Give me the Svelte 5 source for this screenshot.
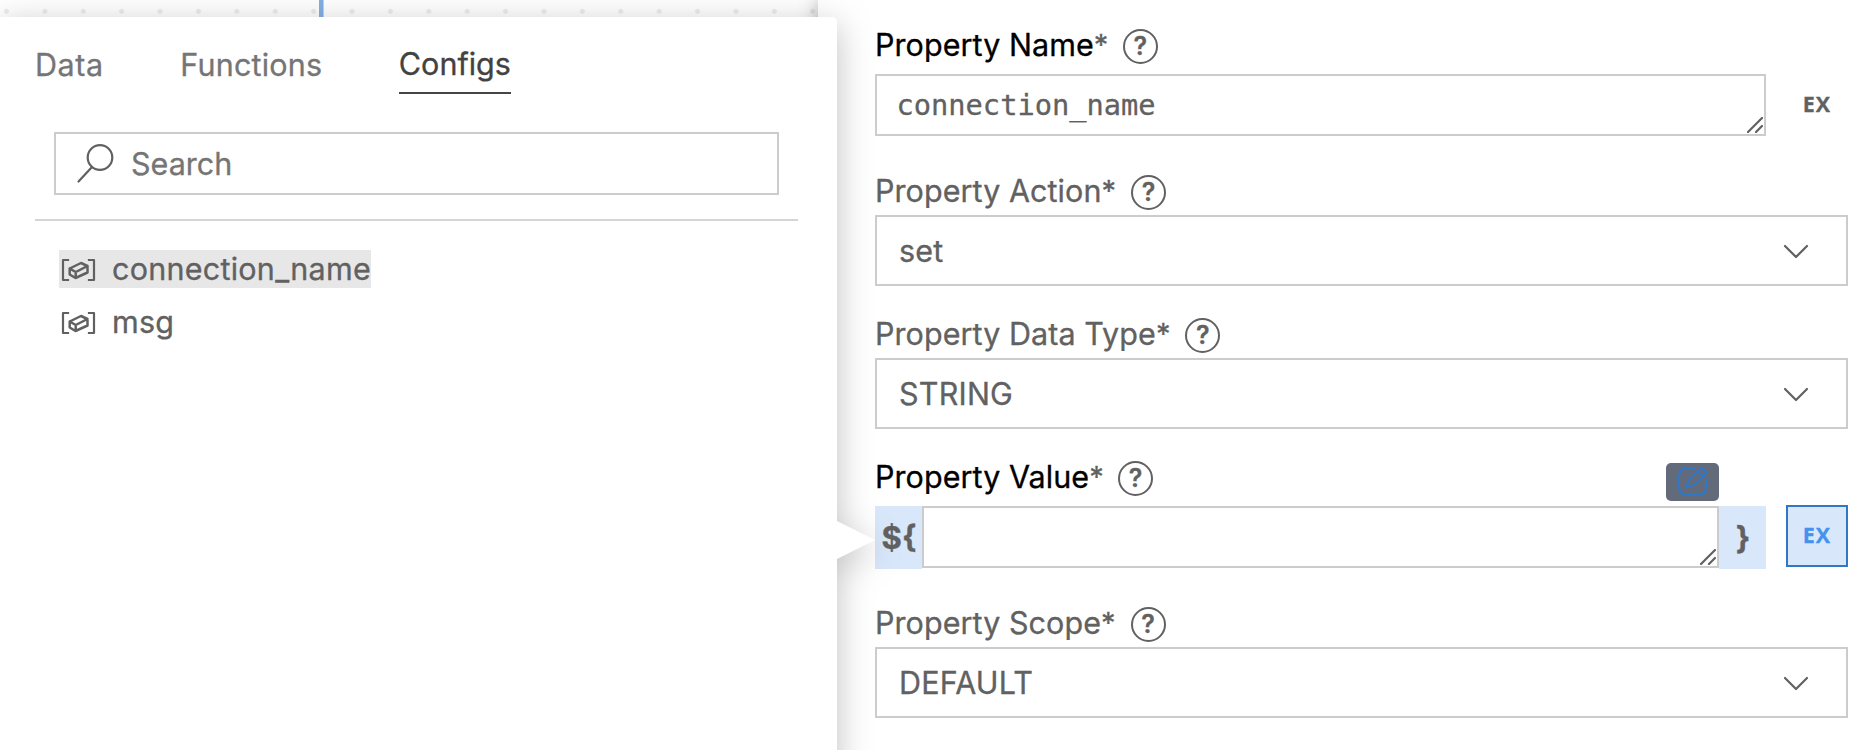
<script>
  const tabs = [
    { name: 'Data', spacing: 0.6 },
    { name: 'Functions', spacing: 0.2 },
    { name: 'Configs', spacing: 0, active: true }
  ];
  const configs = [
    { name: 'connection_name', selected: true },
    { name: 'msg', selected: false }
  ];
  const fields = [
    { label: 'Property Name', kind: 'text', value: 'connection_name', dark: true },
    { label: 'Property Action', kind: 'select', value: 'set' },
    { label: 'Property Data Type', kind: 'select', value: 'STRING' },
    { label: 'Property Value', kind: 'expression', value: '', dark: true },
    { label: 'Property Scope', kind: 'select', value: 'DEFAULT' }
  ];
</script>

{#snippet grip()}
  <svg class="grip" width="16" height="16" viewBox="0 0 16 16"><path d="M1 15 15 1M9 15l6-6" /></svg>
{/snippet}

<div class="page">
  <div class="canvas"><div class="edge"></div></div>

  <main class="properties">
    {#each fields as f}
      <section class="field {f.kind}">
        <div class="label" class:dark={f.dark}>
          <span>{f.label}</span><span class="star">*</span><span class="help">?</span>
        </div>
        {#if f.kind === 'select'}
          <div class="dropdown">
            <span>{f.value}</span>
            <svg width="26" height="16" viewBox="0 0 26 16"><path d="M2 3 13 14 24 3" /></svg>
          </div>
        {:else if f.kind === 'text'}
          <div class="row">
            <div class="area">{f.value}{@render grip()}</div>
            <button class="ex">EX</button>
          </div>
        {:else}
          <div class="row">
            <div class="brace">$&#123;</div>
            <div class="area">{f.value}{@render grip()}
              <div class="edit">
                <svg width="31" height="31" viewBox="0 0 31 31">
                  <path d="M17 2.200H10.500Q2 2.200 2 10.500v10.500Q2 29 10.500 29h10Q29 29 29 21V13.500" />
                  <path d="M9.500 21.200 11.700 14 22 3.700a3.900 3.900 0 0 1 5.600 5.600L17 19ZM20.500 5.300l5.500 5.500" />
                </svg>
              </div>
            </div>
            <div class="brace">&#125;</div>
            <button class="ex on">EX</button>
          </div>
        {/if}
      </section>
    {/each}
  </main>

  <aside class="popover">
    <nav>
      {#each tabs as t}
        <span class="tab" class:active={t.active} style:letter-spacing="{t.spacing}px">{t.name}</span>
      {/each}
    </nav>
    <div class="search">
      <svg width="38" height="42" viewBox="0 0 38 42"><circle cx="24" cy="14.500" r="12.300" /><path d="M16 24 2.500 38.500" /></svg>
      <span>Search</span>
    </div>
    <hr />
    <ul>
      {#each configs as c}
        <li class:selected={c.selected}>
          <svg width="36" height="24" viewBox="0 0 36 24">
            <path class="bracket" d="M8 2H3v20h5M29 2h5v20h-5" />
            <path d="M9.700 10.500 21 5 27.500 8v6.500L15.500 20 9.700 16.500ZM9.700 10.500l6 3.500L27.500 8M15.700 14v6" />
          </svg>
          <span>{c.name}</span>
        </li>
      {/each}
    </ul>
    <svg class="pointer" width="38" height="38" viewBox="0 0 38 38"><path d="M0 0 38 19 0 38Z" /></svg>
  </aside>
</div>

<style>
  :global(body) { margin: 0; background: #fff; overflow: hidden; }
  .page {
    position: relative;
    display: grid;
    grid-template-columns: 818px 1fr;
    width: 1870px;
    height: 750px;
    overflow: hidden;
    font-family: Inter, "Liberation Sans", sans-serif;
    font-size: 30.5px;
    line-height: 38px;
    color: #616161;
    -webkit-text-stroke: 0.3px currentColor;
  }
  svg { display: block; flex: none; fill: none; stroke: #616161; stroke-width: 2.2; stroke-linecap: round; stroke-linejoin: round; }
  .canvas {
    background: #fff radial-gradient(circle, #e9edf0 2.1px, transparent 2.8px) -12.7px -7.9px / 38.4px 38.4px;
  }
  .edge { width: 4px; height: 100%; margin-left: 319px; background: #84afe3; border-right: 1px solid #bed3ee; }
  .properties {
    background: #fff;
    box-shadow: 0 0 18px rgba(0, 0, 0, 0.3);
    padding: 26px 22px 0 57px;
  }
  .field { margin-bottom: 29px; }
  .field.text { margin-bottom: 36px; }
  .field.expression { margin-bottom: 35px; }
  .label { display: flex; align-items: center; height: 38px; margin-bottom: 5px; letter-spacing: 0.06px; }
  .text .label, .expression .label { margin-bottom: 10px; }
  .label.dark { color: #000; }
  .star { color: #616161; font-size: 29px; width: 15px; }
  .help {
    box-sizing: border-box;
    width: 35px;
    height: 35px;
    margin: 2px 0 0 14px;
    border: 2.4px solid #616161;
    border-radius: 50%;
    color: #616161;
    font-size: 25px;
    font-weight: 600;
    line-height: 31px;
    text-align: center;
  }
  .select .help { margin-left: 14.500px; }
  .dropdown {
    box-sizing: border-box;
    display: flex;
    align-items: center;
    justify-content: space-between;
    height: 71px;
    padding: 0 37.500px 0 22px;
    border: 2px solid #ccc;
    letter-spacing: 0.2px;
  }
  .row { display: flex; }
  .area {
    position: relative;
    box-sizing: border-box;
    flex: 1;
    height: 62px;
    padding: 10px 19.5px;
    border: 2px solid #ccc;
    font-family: "DejaVu Sans Mono", monospace;
    font-size: 28.700px;
  }
  .grip { position: absolute; right: 1px; bottom: 1px; }
  .ex {
    box-sizing: border-box;
    width: 62px;
    height: 62px;
    margin-left: 20px;
    padding: 0 0 2px;
    border: 2px solid transparent;
    background: none;
    color: #616161;
    font: 700 21.5px/56px "Open Sans", sans-serif;
    letter-spacing: 1px;
    text-align: center;
  }
  .ex.on { margin-top: -1px; border-color: #3077c6; background: #d9e7fa; color: #4492ee; }
  .brace {
    box-sizing: border-box;
    width: 47px;
    height: 63px;
    padding-left: 1px;
    background: #d9e7fa;
    font-size: 31px;
    font-weight: 700;
    line-height: 64px;
    text-align: center;
  }
  .edit {
    position: absolute;
    right: -2px;
    top: -45px;
    width: 53px;
    height: 38px;
    border-radius: 5px;
    background: #636b7a;
  }
  .edit svg { margin: 3px 0 0 11px; stroke: #3077c6; }
  .popover {
    position: absolute;
    left: 0;
    top: 17px;
    box-sizing: border-box;
    width: 837px;
    height: 900px;
    padding: 28px 39px 0 35px;
    border-radius: 0 5px 0 0;
    background: #fff;
    filter: drop-shadow(0 8px 17px rgba(0, 0, 0, 0.25));
  }
  nav { display: flex; gap: 76.500px; height: 87px; color: #757575; }
  .tab { box-sizing: border-box; height: 49px; padding-top: 1px; }
  .tab.active { padding-top: 0; border-bottom: 2px solid #454545; color: #424242; }
  .search {
    box-sizing: border-box;
    display: flex;
    align-items: center;
    height: 63px;
    margin: 0 19px 24px;
    padding-left: 20px;
    border: 2px solid #ccc;
    color: #757575;
  }
  .search span { margin-left: 17px; }
  hr { height: 2px; margin: 0; border: 0; background: #d5d5d5; }
  ul { display: flex; flex-direction: column; align-items: flex-start; gap: 15px; margin: 29px 0 0 24px; padding: 0; list-style: none; }
  li { display: flex; align-items: center; height: 38px; letter-spacing: 0.25px; }
  li svg { margin: 1px 16px 0 1px; stroke-width: 2.500; }
  .bracket { stroke-linecap: square; stroke-width: 2.200; }
  .selected { background: #e7e7e7; }
  .pointer { position: absolute; left: 837px; top: 504px; fill: #fff; stroke: none; }
</style>
